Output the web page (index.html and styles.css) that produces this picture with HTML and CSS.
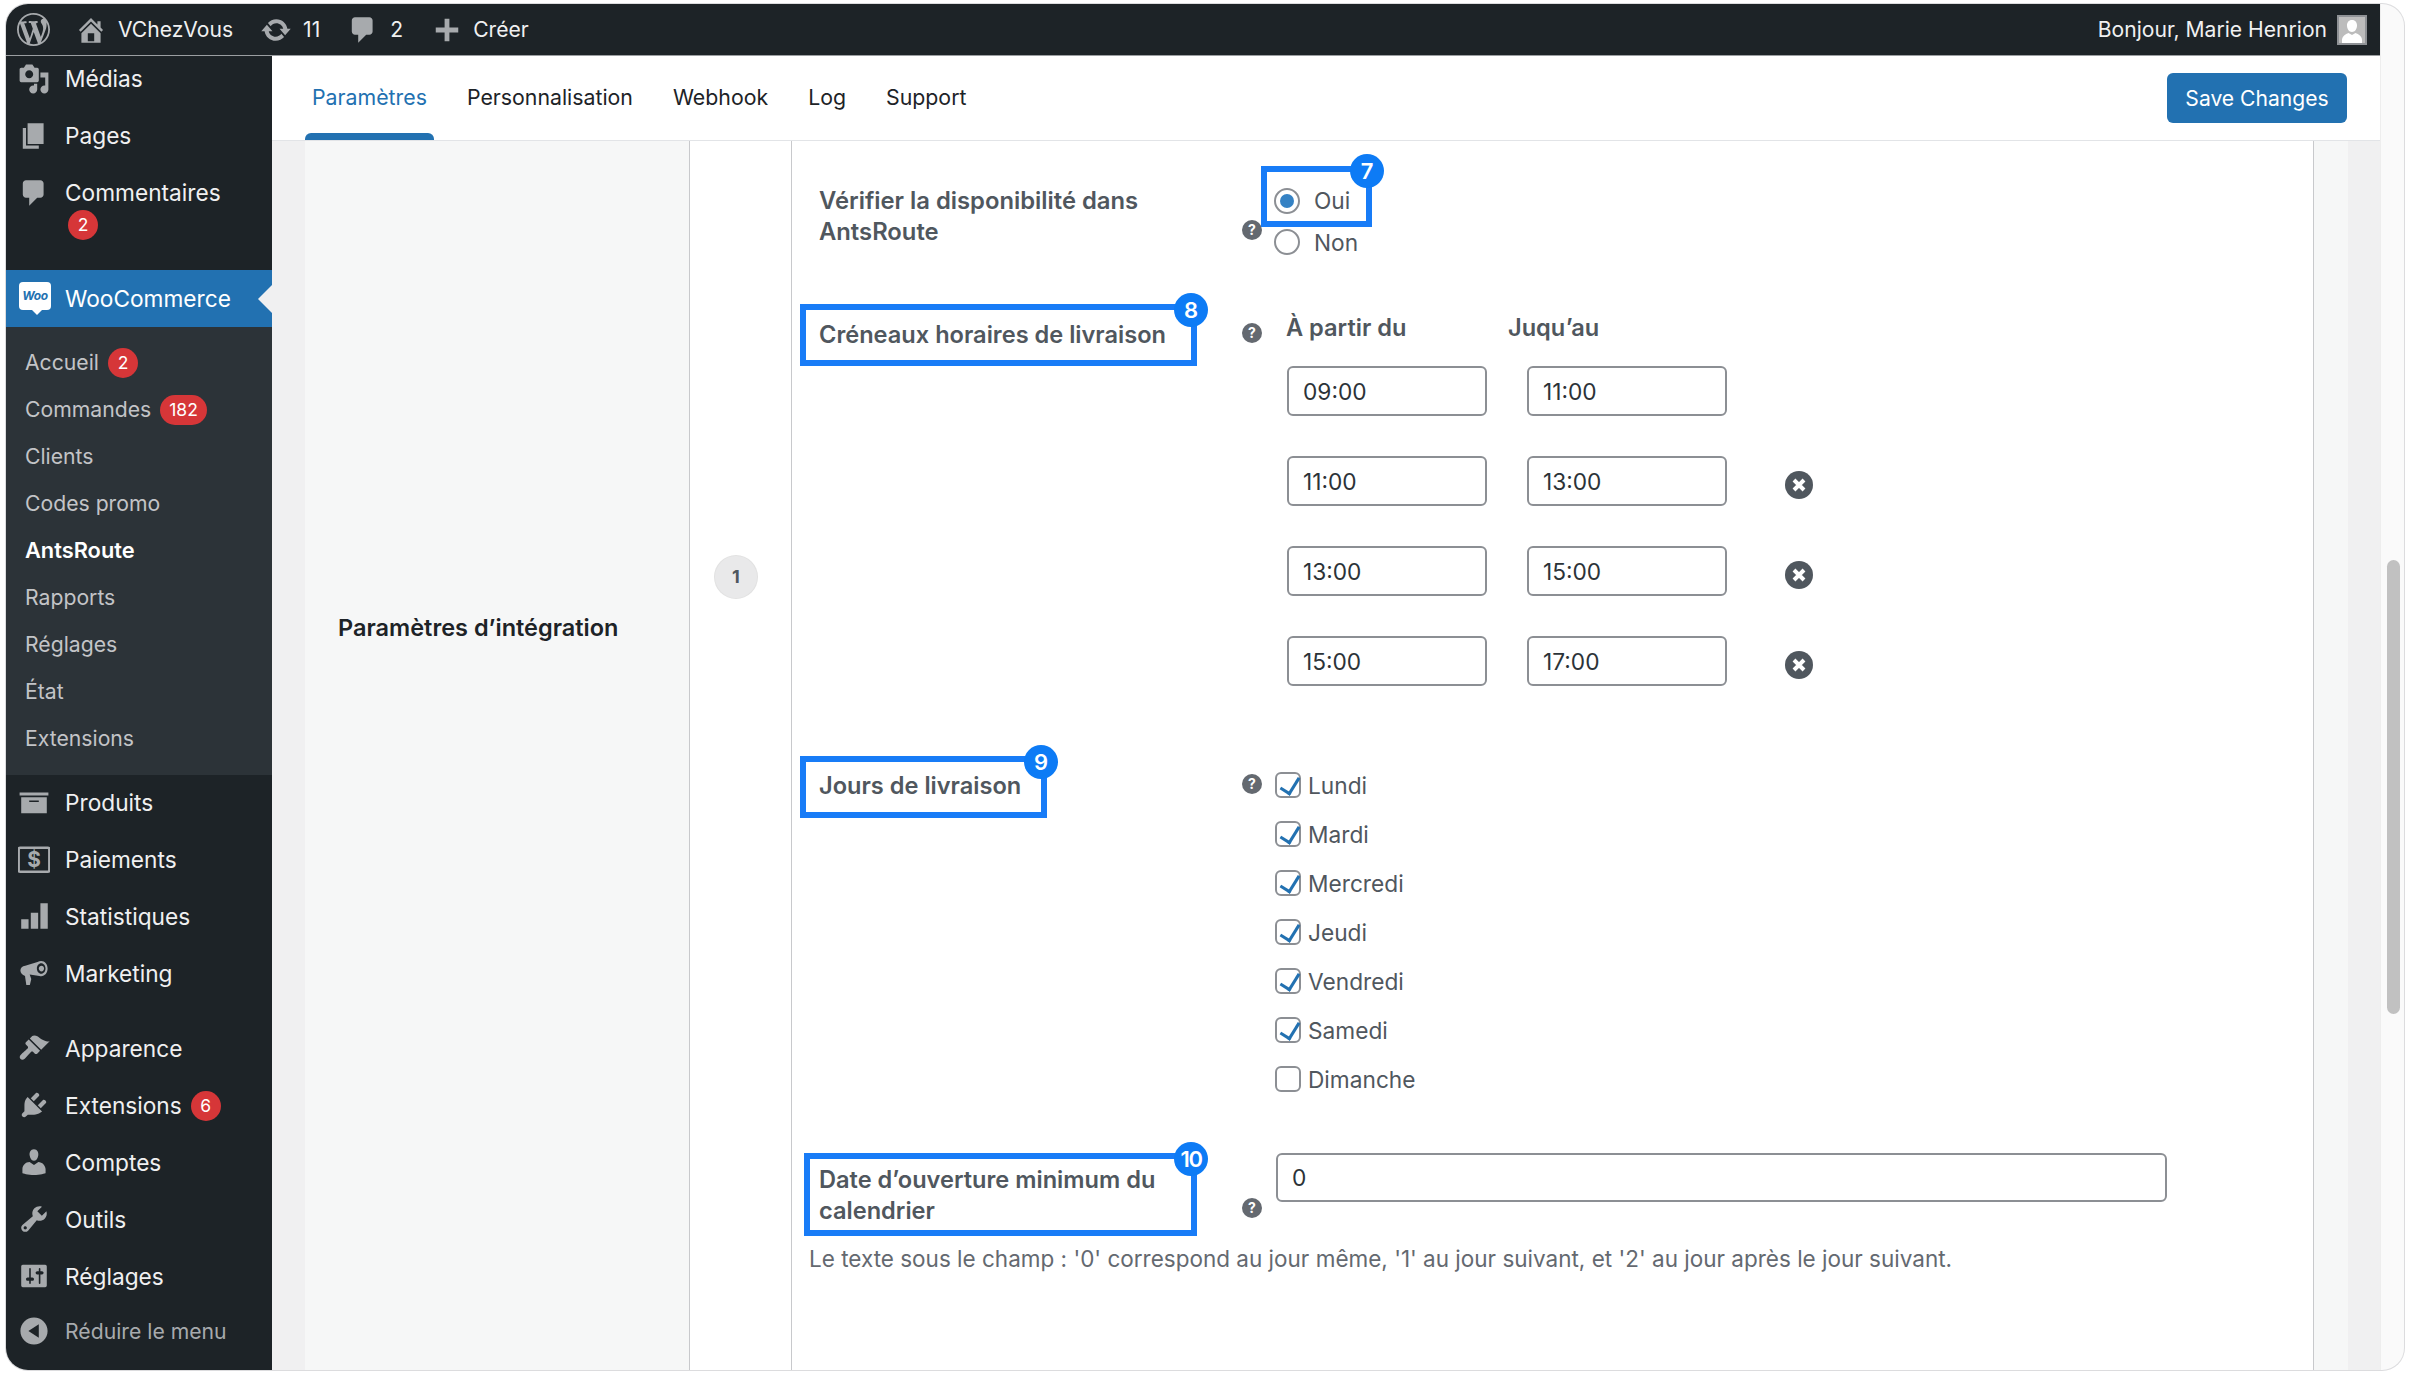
FILE: index.html
```html
<!DOCTYPE html>
<html lang="fr">
<head>
<meta charset="utf-8">
<title>AntsRoute</title>
<link rel="stylesheet" href="styles.css">
</head>
<body>
<div class="window">
  <div class="frame">
    <header class="adminbar">
      <svg class="ab-logo" viewBox="0 0 20 20"><path d="M20 10c0-5.510-4.490-10-10-10C4.480 0 0 4.490 0 10c0 5.520 4.480 10 10 10 5.510 0 10-4.480 10-10zM7.780 15.370L4.370 6.220c.55-.02 1.170-.08 1.170-.08.5-.06.44-1.130-.06-1.110 0 0-1.450.11-2.370.11-.18 0-.37 0-.58-.01C4.120 2.690 6.870 1.110 10 1.110c2.330 0 4.450.87 6.050 2.340-.68-.11-1.650.39-1.650 1.580 0 .74.45 1.360.9 2.100.35.61.55 1.360.55 2.460 0 1.490-1.400 5-1.400 5l-3.030-8.370c.54-.02.82-.17.82-.17.5-.05.44-1.250-.06-1.220 0 0-1.440.12-2.380.12-.87 0-2.330-.12-2.330-.12-.5-.03-.56 1.200-.06 1.220l.92.08 1.260 3.410zM17.410 10c.24-.64.74-1.870.43-4.250.7 1.290 1.050 2.710 1.050 4.250 0 3.290-1.730 6.240-4.400 7.780.97-2.590 1.940-5.200 2.920-7.780zM6.100 18.090C3.120 16.650 1.110 13.530 1.110 10c0-1.300.23-2.480.72-3.590C3.250 10.300 4.670 14.200 6.100 18.090zm4.030-6.630l2.580 6.980c-.86.29-1.760.45-2.710.45-.79 0-1.570-.11-2.290-.33.81-2.380 1.620-4.740 2.420-7.100z"/></svg>
      <svg class="ab-icon ab-home" viewBox="0 0 20 20"><path d="M16 8.500l1.530 1.530-1.060 1.060L10 4.620l-6.470 6.470-1.060-1.060L10 2.500l4 4v-2h2v4zm-6-2.460l6 5.990V18H4v-5.970zM12 17v-5H8v5h4z"/></svg>
      <span class="ab-text ab-site">VChezVous</span>
      <svg class="ab-icon ab-update" viewBox="0 0 20 20"><path d="M10.200 3.280c3.530 0 6.430 2.610 6.920 6h2.080l-3.500 4-3.500-4h2.320c-.45-1.970-2.210-3.450-4.320-3.450-1.450 0-2.730.71-3.540 1.780L4.950 5.660C6.230 4.200 8.110 3.280 10.200 3.280zm-.4 13.440c-3.520 0-6.430-2.610-6.920-6H.8l3.500-4c1.170 1.330 2.330 2.670 3.500 4H5.480c.45 1.970 2.210 3.450 4.320 3.450 1.450 0 2.730-.71 3.540-1.780l1.710 1.950c-1.280 1.460-3.150 2.380-5.250 2.380z"/></svg>
      <span class="ab-text ab-count">11</span>
      <svg class="ab-icon ab-comment" viewBox="0 0 20 20"><path d="M5 2h9c1.100 0 2 .9 2 2v7c0 1.100-.9 2-2 2h-2l-5 5v-5H5c-1.100 0-2-.9-2-2V4c0-1.100.9-2 2-2z"/></svg>
      <span class="ab-text ab-count2">2</span>
      <svg class="ab-plus" viewBox="0 0 20 20"><path d="M17.500 8.400v3.200h-5.900v5.900H8.400v-5.900H2.500V8.400h5.900V2.500h3.200v5.900z"/></svg>
      <span class="ab-text ab-new">Créer</span>
      <span class="ab-text ab-hello">Bonjour, Marie Henrion</span>
      <svg class="ab-avatar" viewBox="0 0 30 30"><rect width="30" height="30" fill="#bcbcbc"/><path fill="#fff" d="M15 5c3.400 0 5.300 2.700 5 6-.3 3.200-2 6-5 6s-4.700-2.800-5-6c-.3-3.300 1.600-6 5-6zM5 28v-3c0-3.500 3.500-6 6.500-7l3.500 2 3.500-2c3 1 6.500 3.500 6.500 7v3z"/><rect x="1" y="1" width="28" height="28" fill="none" stroke="#8f9296" stroke-width="2"/></svg>
    </header>
    <div class="workspace">
      <nav class="sidebar">
        <ul class="menu">
          <li class="item"><svg class="mi" viewBox="0 0 20 20"><path d="M13 11V4c0-.55-.45-1-1-1h-1.670L9 1H5L3.670 3H2c-.55 0-1 .45-1 1v7c0 .55.45 1 1 1h10c.55 0 1-.45 1-1zM7 4.500c1.380 0 2.500 1.120 2.500 2.500S8.380 9.500 7 9.500 4.500 8.380 4.500 7 5.620 4.500 7 4.500zM14 6h5v10.500c0 1.380-1.120 2.500-2.500 2.500S14 17.880 14 16.500s1.120-2.500 2.500-2.500c.17 0 .34.02.5.05V9h-3V6zm-4 8.050V13h2v3.500c0 1.380-1.120 2.500-2.500 2.500S7 17.880 7 16.500 8.120 14 9.500 14c.17 0 .34.02.5.05z"/></svg><span>Médias</span></li>
          <li class="item"><svg class="mi" viewBox="0 0 20 20"><path d="M6 15V2h10v13H6zm-1 1h8v2H3V5h2v11z"/></svg><span>Pages</span></li>
          <li class="item item-tall"><svg class="mi" viewBox="0 0 20 20"><path d="M5 2h9c1.100 0 2 .9 2 2v7c0 1.100-.9 2-2 2h-2l-5 5v-5H5c-1.100 0-2-.9-2-2V4c0-1.100.9-2 2-2z"/></svg><span class="stack">Commentaires<b class="badge badge-below">2</b></span></li>
          <li class="item item-current">
            <span class="woo"><span class="woo-text">Woo</span></span><span>WooCommerce</span>
          </li>
        </ul>
        <ul class="submenu">
          <li>Accueil<b class="badge">2</b></li>
          <li>Commandes<b class="badge">182</b></li>
          <li>Clients</li>
          <li>Codes promo</li>
          <li class="sub-current">AntsRoute</li>
          <li>Rapports</li>
          <li>Réglages</li>
          <li>État</li>
          <li>Extensions</li>
        </ul>
        <ul class="menu">
          <li class="item"><svg class="mi" viewBox="0 0 20 20"><path d="M19 4v2H1V4h18zM2 7h16v10H2V7zm11 3V9H7v1h6z"/></svg><span>Produits</span></li>
          <li class="item"><svg class="mi" viewBox="0 0 20 20"><rect x=".4" y="3" width="19.200" height="15" rx="1" fill="none" stroke="#a7aaad" stroke-width="1.600"/><text x="10" y="15" text-anchor="middle" class="dollar">$</text></svg><span>Paiements</span></li>
          <li class="item"><svg class="mi" viewBox="0 0 20 20"><path d="M2 12h4.600v6H2zM8 8h4.600v10H8zM14 2h4.600v16H14z"/></svg><span>Statistiques</span></li>
          <li class="item"><svg class="mi" viewBox="0 0 20 20"><path d="M14.500 2.500c2.300 0 4 2.100 4 4.700s-1.700 4.800-4 4.800c-.4 0-.8-.1-1.100-.2L7.300 11l1 2.800-.9 3.700H5.200L4.500 12.800l-.1-1C2.700 11.500 1.500 10 1.500 8.500 1.500 6.900 2.700 5.700 4.500 5.500l7.700-2.300c.7-.4 1.500-.7 2.300-.7zm0 1.400c-1.500 0-2.700 1.500-2.700 3.300s1.200 3.300 2.700 3.300 2.700-1.500 2.700-3.300-1.200-3.300-2.700-3.300zm.2 1.500c.9 0 1.600.8 1.600 1.800S15.600 9 14.700 9 13 8.200 13 7.200s.8-1.800 1.700-1.800z"/></svg><span>Marketing</span></li>
          <li class="item item-gap"><svg class="mi" viewBox="0 0 20 20"><path d="M14.480 11.060L7.410 3.990l1.500-1.500c.5-.56 2.300-.47 3.510.32 1.210.8 1.430 1.280 2.910 2.100 1.180.64 2.450 1.260 4.450.85zm-.71.71L6.700 4.700 4.930 6.470c-.39.39-.39 1.020 0 1.410l1.060 1.060c.39.39.39 1.030 0 1.420-.6.6-3.100 2.700-4.200 3.900-.9.9-.9 1.900-.2 2.600s1.700.7 2.600-.2c1.200-1.100 3.300-3.600 3.900-4.200.39-.39 1.030-.39 1.420 0l1.060 1.060c.39.39 1.020.39 1.410 0z"/></svg><span>Apparence</span></li>
          <li class="item"><svg class="mi" viewBox="0 0 20 20"><path d="M13.110 4.360L9.870 7.600 8 5.730l3.240-3.240c.35-.34 1.050-.2 1.560.32.520.51.660 1.210.31 1.550zm-8 1.770l.91-1.120 9.010 9.010-1.190.84c-.71.71-2.630 1.160-3.820 1.160H6.140L4.900 17.260c-.59.590-1.540.590-2.120 0-.59-.58-.59-1.530 0-2.120l1.240-1.240v-3.880c0-1.130.4-3.190 1.090-3.890zm7.260 3.970l3.240-3.240c.34-.35 1.040-.21 1.550.31.520.51.660 1.210.31 1.550l-3.240 3.250z"/></svg><span class="inline">Extensions<b class="badge">6</b></span></li>
          <li class="item"><svg class="mi" viewBox="0 0 20 20"><path d="M10 9.250c-2.270 0-2.730-3.440-2.730-3.440C7 4.020 7.820 2 9.970 2c2.160 0 2.980 2.020 2.710 3.810 0 0-.41 3.440-2.680 3.440zm0 2.570L12.720 10c2.390 0 4.520 2.330 4.520 4.530v2.490s-3.650 1.130-7.240 1.130c-3.650 0-7.240-1.130-7.240-1.130v-2.490c0-2.250 1.940-4.480 4.470-4.480z"/></svg><span>Comptes</span></li>
          <li class="item"><svg class="mi" viewBox="0 0 20 20"><path d="M16.680 9.770c-1.340 1.340-3.300 1.670-4.950.99l-5.410 6.520c-.99.99-2.590.99-3.580 0s-.99-2.590 0-3.570l6.520-5.420c-.68-1.650-.35-3.610.99-4.950 1.280-1.280 3.120-1.620 4.720-1.060l-2.890 2.890 2.820 2.820 2.860-2.870c.53 1.580.18 3.390-1.080 4.650zM3.810 16.210c.4.39 1.040.39 1.430 0 .4-.4.4-1.040 0-1.430-.39-.4-1.030-.4-1.430 0-.39.39-.39 1.030 0 1.430z"/></svg><span>Outils</span></li>
          <li class="item"><svg class="mi" viewBox="0 0 20 20"><path d="M18 16V4c0-.55-.45-1-1-1H3c-.55 0-1 .45-1 1v12c0 .55.45 1 1 1h14c.55 0 1-.45 1-1zM8 11h1c.55 0 1 .45 1 1s-.45 1-1 1H8v1.500c0 .28-.22.5-.5.5s-.5-.22-.5-.5V13H6c-.55 0-1-.45-1-1s.45-1 1-1h1V5.500c0-.28.22-.5.5-.5s.5.22.5.5V11zm5-2h-1c-.55 0-1-.45-1-1s.45-1 1-1h1V5.500c0-.28.22-.5.5-.5s.5.22.5.5V7h1c.55 0 1 .45 1 1s-.45 1-1 1h-1v5.500c0 .28-.22.5-.5.5s-.5-.22-.5-.5V9z"/></svg><span>Réglages</span></li>
          <li class="item item-collapse"><svg class="mi" viewBox="0 0 20 20"><path d="M18.500 10c0-4.700-3.800-8.500-8.500-8.500S1.500 5.300 1.500 10s3.800 8.500 8.500 8.500 8.500-3.800 8.500-8.500zM13 5.800v8.400L6.500 10z"/></svg><span>Réduire le menu</span></li>
        </ul>
      </nav>
      <main class="content">
        <div class="tabbar">
          <a class="tab tab-active">Paramètres</a>
          <a class="tab">Personnalisation</a>
          <a class="tab">Webhook</a>
          <a class="tab">Log</a>
          <a class="tab">Support</a>
          <button class="save" type="button">Save Changes</button>
        </div>
        <div class="panels">
          <aside class="section-title">Paramètres d’intégration</aside>
          <div class="section-num"><span class="num">1</span></div>
          <section class="form">
            <div class="row row-check">
              <div class="label-plain">Vérifier la disponibilité dans AntsRoute</div>
              <i class="help help-check">?</i>
              <div class="radios">
                <label class="radio-wrap callout">
                  <input class="radio" type="radio" name="dispo" checked><span>Oui</span>
                  <b class="pin">7</b>
                </label>
                <label class="radio-wrap radio-off">
                  <input class="radio" type="radio" name="dispo"><span>Non</span>
                </label>
              </div>
            </div>

            <div class="row row-slots">
              <div class="callout label-box label-slots">Créneaux horaires de livraison<b class="pin">8</b></div>
              <i class="help help-slots">?</i>
              <div class="slots">
                <div class="slot-head"><span>À partir du</span><span>Juqu’au</span></div>
                <div class="slot-grid">
                  <input class="field" type="text" value="09:00"><input class="field" type="text" value="11:00"><span></span>
                  <input class="field" type="text" value="11:00"><input class="field" type="text" value="13:00">
                  <svg class="remove" viewBox="0 0 28 28"><circle cx="14" cy="14" r="14"/><path d="M9 9l10 10M19 9L9 19"/></svg>
                  <input class="field" type="text" value="13:00"><input class="field" type="text" value="15:00">
                  <svg class="remove" viewBox="0 0 28 28"><circle cx="14" cy="14" r="14"/><path d="M9 9l10 10M19 9L9 19"/></svg>
                  <input class="field" type="text" value="15:00"><input class="field" type="text" value="17:00">
                  <svg class="remove" viewBox="0 0 28 28"><circle cx="14" cy="14" r="14"/><path d="M9 9l10 10M19 9L9 19"/></svg>
                </div>
              </div>
            </div>

            <div class="row row-days">
              <div class="callout label-box label-days">Jours de livraison<b class="pin">9</b></div>
              <i class="help help-days">?</i>
              <div class="days">
                <label class="day"><input class="check" type="checkbox" checked><span>Lundi</span></label>
                <label class="day"><input class="check" type="checkbox" checked><span>Mardi</span></label>
                <label class="day"><input class="check" type="checkbox" checked><span>Mercredi</span></label>
                <label class="day"><input class="check" type="checkbox" checked><span>Jeudi</span></label>
                <label class="day"><input class="check" type="checkbox" checked><span>Vendredi</span></label>
                <label class="day"><input class="check" type="checkbox" checked><span>Samedi</span></label>
                <label class="day"><input class="check" type="checkbox"><span>Dimanche</span></label>
              </div>
            </div>

            <div class="row row-date">
              <div class="callout label-box label-date">Date d’ouverture minimum du calendrier<b class="pin pin-wide">10</b></div>
              <i class="help help-date">?</i>
              <div class="date-control"><input class="field field-wide" type="text" value="0"></div>
            </div>
            <p class="desc">Le texte sous le champ : '0' correspond au jour même, '1' au jour suivant, et '2' au jour après le jour suivant.</p>
          </section>
          <div class="margin-a"></div>
          <div class="margin-b"></div>
        </div>
      </main>
    </div>
  </div>
  <div class="gutter"><div class="thumb"></div></div>
</div>
</body>
</html>
```
FILE: styles.css
```css
* { box-sizing: border-box; }
html, body { margin: 0; height: 100%; }
body {
  background: #fff;
  padding: 4px 5px 4px 6px;
  font-family: Inter, "Liberation Sans", sans-serif;
  font-size: 22.7px;
  line-height: 31px;
  overflow: hidden;
}
ul { list-style: none; margin: 0; padding: 0; }
.window {
  display: flex;
  height: 1366px;
  border-radius: 22px;
  overflow: hidden;
  background: #fafafa;
  box-shadow: 0 0 0 1px #dcdcde;
}
.frame { width: 2374px; flex: none; display: flex; flex-direction: column; }
.gutter { flex: 1; padding: 556px 5px 0 6px; border-left: 1px solid #eeeeee; }
.thumb { height: 454px; width: 13px; border-radius: 7px; background: #c1c1c1; }

/* admin bar */
.adminbar {
  height: 52px; flex: none;
  background: #1d2327;
  display: flex; align-items: center;
  position: relative; z-index: 2;
  color: #f0f0f1;
  border-bottom: 1px solid #9b9ea1;
}
.adminbar svg { flex: none; fill: #a7aaad; }
.ab-logo { width: 33px; height: 33px; margin-left: 11px; }
.ab-icon { width: 32px; height: 32px; }
.ab-home { margin-left: 25px; }
.ab-text { font-size: 21.1px; white-space: nowrap; }
.ab-site { margin-left: 11px; }
.ab-update { margin-left: 27px; }
.ab-count { margin-left: 11px; }
.ab-comment { margin-left: 27px; }
.ab-count2 { margin-left: 11px; }
.ab-plus { width: 30px; height: 30px; margin-left: 29px; }
.ab-new { margin-left: 11px; }
.ab-hello { margin-left: auto; }
.ab-avatar { width: 30px; height: 30px; margin: 0 13px 0 10px; }

.workspace { flex: 1; display: flex; min-height: 0; }

/* sidebar */
.sidebar {
  width: 266px; flex: none;
  background: #1d2327;
  color: #f0f0f1;
  overflow: hidden;
}
.sidebar > .menu:first-child { margin-top: -6px; }
.item {
  position: relative;
  height: 57px;
  display: flex; align-items: center;
  font-size: 22.7px;
  white-space: nowrap;
}
.submenu + .menu .item { padding-bottom: 3px; }
.mi { width: 32px; height: 32px; flex: none; fill: #a7aaad; margin: 0 15px 0 12px; }
.item-tall { height: 106px; align-items: flex-start; padding-top: 13px; }
.stack { display: block; }
.badge {
  display: inline-block;
  min-width: 30px; height: 30px;
  padding: 0 9px;
  margin-left: 9px;
  background: #d63638;
  border-radius: 15px;
  color: #fff;
  font-weight: 400;
  font-size: 17.5px;
  line-height: 30px;
  text-align: center;
  vertical-align: 2px;
}
.badge-below { display: block; width: 30px; margin: 2px 0 0 3px; padding: 0; }
.item-current { background: #2271b1; color: #fff; }
.item-current::after {
  content: "";
  position: absolute; right: 0; top: 50%;
  margin-top: -14px;
  border: 14px solid transparent;
  border-right-color: #f0f0f1;
  border-left-width: 0;
}
.woo {
  width: 32px; height: 28px;
  margin: 0 14px 5px 13px;
  background: #fff;
  border-radius: 4px;
  position: relative;
  display: flex; align-items: center; justify-content: center;
}
.woo::after {
  content: "";
  position: absolute; left: 13px; bottom: -5px;
  border: 5px solid transparent;
  border-top-color: #fff;
  border-bottom-width: 0;
}
.woo-text { color: #2271b1; font-size: 12px; font-weight: 700; font-style: italic; line-height: 1; letter-spacing: -.3px; }
.submenu {
  background: #2c3338;
  padding: 12px 0 13px 19px;
  color: #c3c4c7;
  font-size: 21.2px;
}
.submenu li { height: 47px; display: flex; align-items: center; white-space: nowrap; }
.sub-current { color: #fff; font-weight: 600; font-size: 21.8px; }
.item-gap { margin-top: 18px; }
.item-collapse { height: 53px; color: #a7aaad; font-size: 21.2px; }
.dollar { font: 700 13px Inter, sans-serif; fill: #a7aaad; }

/* content */
.content { flex: 1; min-width: 0; display: flex; flex-direction: column; background: #f0f0f1; }
.tabbar {
  flex: none; height: 85px;
  background: #fff;
  border-bottom: 1px solid #e2e4e7;
  display: flex; gap: 26px;
  padding: 0 33px;
}
.tab {
  display: flex; flex-direction: column; justify-content: space-between;
  margin: 0 7px;
  padding-top: 26px;
  font-size: 21.3px; color: #1d2327;
  white-space: nowrap;
}
.tab::after { content: ""; display: block; height: 7px; margin: 0 -7px; border-radius: 6px 6px 0 0; }
.tab-active { color: #2271b1; }
.tab-active::after { background: #2271b1; }
.save {
  margin: 17px 0 0 auto;
  width: 180px; height: 50px;
  background: #2271b1; color: #fff;
  border: 0; border-radius: 6px;
  font: 400 21.1px Inter, sans-serif;
}
.panels { flex: 1; min-height: 0; display: flex; padding-left: 33px; overflow: hidden; }
.section-title {
  width: 385px; flex: none;
  background: #f6f7f7;
  border-right: 1px solid #c8c9cc;
  padding: 471px 0 0 33px;
  color: #1d2327; font-weight: 600; font-size: 23.5px;
}
.section-num { width: 102px; flex: none; background: #fff; border-right: 1px solid #c8c9cc; padding: 415px 0 0 25px; }
.num {
  display: block; width: 42px; height: 42px;
  border-radius: 50%;
  background: #e9e9ea;
  box-shadow: 0 0 0 1px #e2e2e2;
  color: #50575e; font-size: 18px; font-weight: 700;
  line-height: 42px; text-align: center;
}
.form { width: 1521px; flex: none; background: #fff; padding: 25px 0 0 0; color: #50575e; }
.margin-a { width: 35px; flex: none; background: #f6f7f7; border-left: 1px solid #c8c9cc; }
.margin-b { flex: 1; }

/* rows */
.row { display: grid; grid-template-columns: 450px 19px 1fr; align-items: start; }
.label-plain, .label-box { font-weight: 600; color: #50575e; font-size: 23.6px; }
.label-plain { width: 345px; margin: 19px 0 0 27px; font-size: 23.8px; }
.callout { position: relative; display: block; border: 6px solid #187cf7; }
.label-box { padding: 0 0 0 13px; white-space: normal; }
.label-slots { margin-left: 8px; width: 397px; height: 62px; padding-top: 9px; }
.label-days { margin-left: 8px; width: 247px; height: 62px; padding-top: 8px; }
.label-date { margin-left: 12px; width: 393px; height: 83px; padding: 5px 0 0 9px; }
.pin {
  position: absolute;
  width: 34px; height: 34px;
  border-radius: 50%;
  background: #0d7bf5;
  color: #fff;
  font-size: 22px; font-weight: 600;
  line-height: 34px; text-align: center;
  z-index: 1;
}
.pin-wide { letter-spacing: -1.5px; }
.label-slots .pin, .label-days .pin, .label-date .pin { right: -17px; top: -17px; }
.radio-wrap .pin { right: -18px; top: -18px; }
.help {
  display: block; width: 20px; height: 20px;
  border-radius: 50%;
  background: #646970; color: #fff;
  font-size: 14px; font-style: normal; font-weight: 700;
  line-height: 20px; text-align: center;
}
.help-check { margin-top: 54px; }
.help-slots { margin-top: 19px; }
.help-days { margin-top: 18px; }
.help-date { margin-top: 45px; }

.radios { display: flex; flex-direction: column; }
.radio-wrap { width: 111px; display: flex; align-items: center; gap: 14px; }
.callout.radio-wrap { height: 61px; padding: 8px 0 0 7px; }
.radio-off { padding-left: 13px; height: 30px; }
.radio, .check {
  appearance: none; -webkit-appearance: none;
  margin: 0; flex: none;
  width: 26px; height: 26px;
  border: 2px solid #8c8f94;
  background: #fff;
  display: block;
  position: relative;
}
.radio { border-radius: 50%; }
.radio:checked::before {
  content: ""; position: absolute; left: 4px; top: 4px;
  width: 14px; height: 14px; border-radius: 50%;
  background: #3582c4;
}
.check { border-radius: 6px; }
.check:checked::before {
  content: ""; position: absolute; left: 7px; top: 0;
  width: 9px; height: 17px;
  border: solid #2271b1; border-width: 0 3.500px 3.500px 0;
  transform: rotate(32deg);
}

.row-slots { margin-top: 47px; }
.slots { padding: 8px 0 0 26px; }
.slot-head { display: grid; grid-template-columns: 222px auto; margin-left: -1px; font-weight: 600; font-size: 23.6px; }
.slot-grid { display: grid; grid-template-columns: 200px 200px auto; gap: 40px; margin-top: 23px; align-items: center; justify-content: start; }
.field {
  display: block;
  width: 100%; height: 50px;
  padding: 0 14px;
  border: 2px solid #8c8f94;
  border-radius: 6px;
  background: #fff;
  color: #2c3338;
  font: 400 22.7px Inter, sans-serif;
}
.remove { width: 28px; height: 28px; margin: 8px 0 0 18px; }
.remove circle { fill: #50575e; }
.remove path { stroke: #fff; stroke-width: 4; fill: none; }

.row-days { margin-top: 70px; }
.days { padding: 14px 0 0 14px; display: flex; flex-direction: column; gap: 19px; }
.day { display: flex; align-items: center; gap: 7px; height: 30px; }

.row-date { margin-top: 59px; }
.date-control { padding: 0 0 0 15px; }
.field-wide { width: 891px; height: 49px; }
.desc { margin: 7px 0 0 17px; color: #646970; font-size: 22.5px; }
```
